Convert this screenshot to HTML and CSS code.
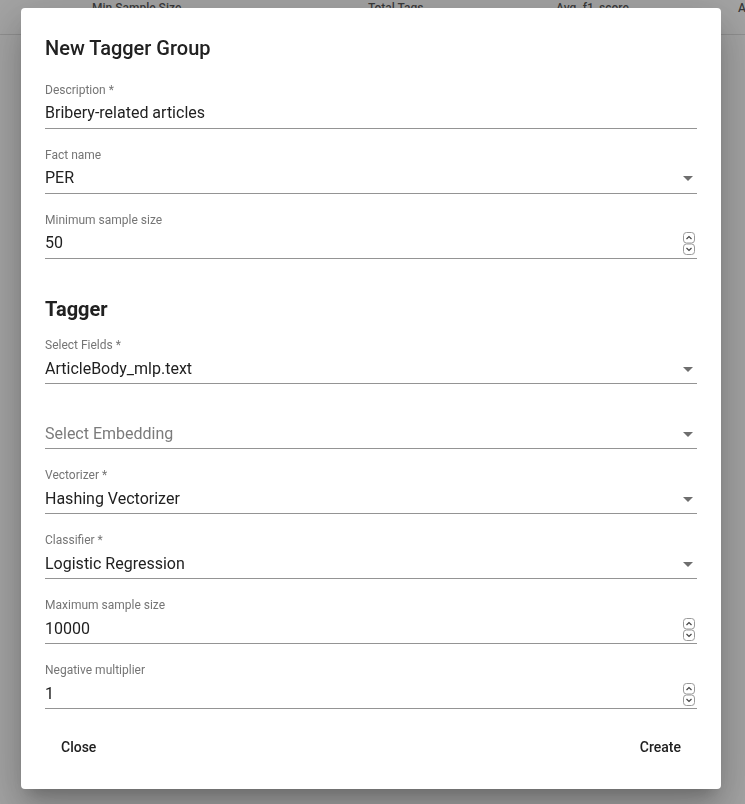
FILE: index.html
```html
<!DOCTYPE html>
<html lang="en">
<head>
<meta charset="utf-8">
<title>New Tagger Group</title>
<link rel="stylesheet" href="styles.css">
</head>
<body>
<div class="page">
  <div class="table-head">
    <span class="th th-min">Min Sample Size</span>
    <span class="th th-total">Total Tags</span>
    <span class="th th-avg">Avg. f1_score</span>
    <span class="th th-actions">Actions</span>
  </div>
</div>

<div class="backdrop">
  <div class="dialog">
    <h2 class="dialog-title">New Tagger Group</h2>

    <div class="field">
      <label class="field-label">Description *</label>
      <div class="field-control"><span class="field-value">Bribery-related articles</span></div>
    </div>

    <div class="field">
      <label class="field-label">Fact name</label>
      <div class="field-control"><span class="field-value">PER</span><span class="arrow"></span></div>
    </div>

    <div class="field">
      <label class="field-label">Minimum sample size</label>
      <div class="field-control"><span class="field-value">50</span>
        <svg class="spinner" width="12" height="23" viewBox="0 0 12 23"><rect x="0.5" y="0.5" width="11" height="10.5" rx="3" fill="#fff" stroke="#9a9a9a"/><rect x="0.5" y="12" width="11" height="10.5" rx="3" fill="#fff" stroke="#9a9a9a"/><path d="M3.5 7 L6 4.5 L8.5 7" fill="none" stroke="#444" stroke-width="1.2"/><path d="M3.5 16 L6 18.5 L8.5 16" fill="none" stroke="#444" stroke-width="1.2"/></svg>
      </div>
    </div>

    <h3 class="section-title">Tagger</h3>

    <div class="field field-low">
      <label class="field-label">Select Fields *</label>
      <div class="field-control"><span class="field-value">ArticleBody_mlp.text</span><span class="arrow"></span></div>
    </div>

    <div class="field field-low">
      <label class="field-label"></label>
      <div class="field-control"><span class="field-placeholder">Select Embedding</span><span class="arrow"></span></div>
    </div>

    <div class="field field-low">
      <label class="field-label">Vectorizer *</label>
      <div class="field-control"><span class="field-value">Hashing Vectorizer</span><span class="arrow"></span></div>
    </div>

    <div class="field field-low">
      <label class="field-label">Classifier *</label>
      <div class="field-control"><span class="field-value">Logistic Regression</span><span class="arrow"></span></div>
    </div>

    <div class="field field-low">
      <label class="field-label">Maximum sample size</label>
      <div class="field-control"><span class="field-value">10000</span>
        <svg class="spinner" width="12" height="23" viewBox="0 0 12 23"><rect x="0.5" y="0.5" width="11" height="10.5" rx="3" fill="#fff" stroke="#9a9a9a"/><rect x="0.5" y="12" width="11" height="10.5" rx="3" fill="#fff" stroke="#9a9a9a"/><path d="M3.5 7 L6 4.5 L8.5 7" fill="none" stroke="#444" stroke-width="1.2"/><path d="M3.5 16 L6 18.5 L8.5 16" fill="none" stroke="#444" stroke-width="1.2"/></svg>
      </div>
    </div>

    <div class="field field-low">
      <label class="field-label">Negative multiplier</label>
      <div class="field-control"><span class="field-value">1</span>
        <svg class="spinner" width="12" height="23" viewBox="0 0 12 23"><rect x="0.5" y="0.5" width="11" height="10.5" rx="3" fill="#fff" stroke="#9a9a9a"/><rect x="0.5" y="12" width="11" height="10.5" rx="3" fill="#fff" stroke="#9a9a9a"/><path d="M3.5 7 L6 4.5 L8.5 7" fill="none" stroke="#444" stroke-width="1.2"/><path d="M3.5 16 L6 18.5 L8.5 16" fill="none" stroke="#444" stroke-width="1.2"/></svg>
      </div>
    </div>

    <div class="dialog-actions">
      <button class="btn">Close</button>
      <button class="btn">Create</button>
    </div>
  </div>
</div>
</body>
</html>
```

FILE: styles.css
```css
html, body {
  margin: 0;
  padding: 0;
  height: 100%;
  overflow: hidden;
  background: #ffffff;
  font-family: Roboto, "Liberation Sans", Arial, sans-serif;
}

.page {
  width: 100%;
}

.table-head {
  position: relative;
  height: 56px;
  margin-top: -22px;
  border-bottom: 1px solid rgba(0, 0, 0, 0.12);
  white-space: nowrap;
  overflow: hidden;
}

.th {
  font-size: 12px;
  font-weight: 500;
  color: rgba(0, 0, 0, 0.66);
  position: absolute;
  top: 23px;
}
.th-min { left: 92px; }
.th-total { left: 368px; }
.th-avg { left: 556px; }
.th-actions { left: 738px; }

.backdrop {
  position: fixed;
  inset: 0;
  background: rgba(0, 0, 0, 0.36);
}

.dialog {
  box-sizing: border-box;
  width: 700px;
  margin: 8px 0 0 21px;
  padding: 24px;
  background: #ffffff;
  border-radius: 4px;
  box-shadow: 0 11px 15px -7px rgba(0, 0, 0, 0.2),
              0 24px 38px 3px rgba(0, 0, 0, 0.14),
              0 9px 46px 8px rgba(0, 0, 0, 0.12);
  display: flex;
  flex-direction: column;
}

.dialog-title {
  margin: 0 0 18px;
  font-size: 20px;
  line-height: 32px;
  font-weight: 500;
  color: #212121;
}

.section-title {
  margin: 18px 0 14px;
  font-size: 20px;
  line-height: 28px;
  font-weight: 700;
  color: #212121;
}

.field {
  margin-bottom: 18px;
}

.field-label {
  display: block;
  height: 16px;
  font-size: 12px;
  line-height: 16px;
  color: #757575;
}

.field-control {
  display: flex;
  align-items: center;
  height: 20px;
  margin-top: 5px;
  padding-bottom: 5px;
  border-bottom: 1px solid #949494;
}

.field-low .field-control {
  margin-top: 6px;
  padding-bottom: 4px;
}

.field-value {
  flex: 1;
  font-size: 16px;
  line-height: 20px;
  color: #212121;
}

.field-placeholder {
  flex: 1;
  font-size: 16px;
  line-height: 20px;
  color: #7b7b7b;
}

.arrow {
  width: 0;
  height: 0;
  margin-right: 4px;
  border-left: 5px solid transparent;
  border-right: 5px solid transparent;
  border-top: 5px solid #6e6e6e;
}

.spinner {
  display: block;
  margin-right: 2px;
  flex-shrink: 0;
}

.dialog-actions {
  display: flex;
  justify-content: space-between;
  margin-top: 2px;
}

.btn {
  height: 36px;
  padding: 0 16px;
  border: none;
  background: transparent;
  font-family: Roboto, "Liberation Sans", Arial, sans-serif;
  font-size: 14px;
  font-weight: 500;
  color: #212121;
  border-radius: 4px;
}
```
